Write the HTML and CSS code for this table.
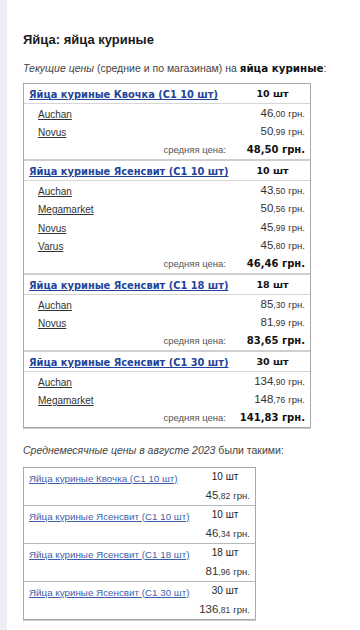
FILE: index.html
```html
<!DOCTYPE html>
<html lang="ru">
<head>
<meta charset="utf-8">
<title>Яйца куриные</title>
<link rel="stylesheet" href="styles.css">
</head>
<body>
<div class="page">
  <h1 class="title">Яйца: яйца куриные</h1>
  <p class="intro"><i>Текущие цены</i> (средние и по магазинам) на <b>яйца куриные</b>:</p>

  <div class="tbl">
    <div class="section">
      <div class="row head"><div class="c1"><a href="#" class="plink">Яйца куриные Квочка (С1 10 шт)</a></div><div class="c2 qty">10 шт</div></div>
      <div class="row"><div class="c1"><a href="#" class="shop">Auchan</a></div><div class="c2 price">46<small>,00</small> <span class="cur">грн.</span></div></div>
      <div class="row"><div class="c1"><a href="#" class="shop">Novus</a></div><div class="c2 price">50<small>,99</small> <span class="cur">грн.</span></div></div>
      <div class="row"><div class="c1 avglabel">средняя цена:</div><div class="c2 avg">48,50 грн.</div></div>
    </div>
    <div class="section">
      <div class="row head"><div class="c1"><a href="#" class="plink">Яйца куриные Ясенсвит (С1 10 шт)</a></div><div class="c2 qty">10 шт</div></div>
      <div class="row"><div class="c1"><a href="#" class="shop">Auchan</a></div><div class="c2 price">43<small>,50</small> <span class="cur">грн.</span></div></div>
      <div class="row"><div class="c1"><a href="#" class="shop">Megamarket</a></div><div class="c2 price">50<small>,56</small> <span class="cur">грн.</span></div></div>
      <div class="row"><div class="c1"><a href="#" class="shop">Novus</a></div><div class="c2 price">45<small>,99</small> <span class="cur">грн.</span></div></div>
      <div class="row"><div class="c1"><a href="#" class="shop">Varus</a></div><div class="c2 price">45<small>,80</small> <span class="cur">грн.</span></div></div>
      <div class="row"><div class="c1 avglabel">средняя цена:</div><div class="c2 avg">46,46 грн.</div></div>
    </div>
    <div class="section">
      <div class="row head"><div class="c1"><a href="#" class="plink">Яйца куриные Ясенсвит (С1 18 шт)</a></div><div class="c2 qty">18 шт</div></div>
      <div class="row"><div class="c1"><a href="#" class="shop">Auchan</a></div><div class="c2 price">85<small>,30</small> <span class="cur">грн.</span></div></div>
      <div class="row"><div class="c1"><a href="#" class="shop">Novus</a></div><div class="c2 price">81<small>,99</small> <span class="cur">грн.</span></div></div>
      <div class="row"><div class="c1 avglabel">средняя цена:</div><div class="c2 avg">83,65 грн.</div></div>
    </div>
    <div class="section">
      <div class="row head"><div class="c1"><a href="#" class="plink">Яйца куриные Ясенсвит (С1 30 шт)</a></div><div class="c2 qty">30 шт</div></div>
      <div class="row"><div class="c1"><a href="#" class="shop">Auchan</a></div><div class="c2 price">134<small>,90</small> <span class="cur">грн.</span></div></div>
      <div class="row"><div class="c1"><a href="#" class="shop">Megamarket</a></div><div class="c2 price">148<small>,76</small> <span class="cur">грн.</span></div></div>
      <div class="row"><div class="c1 avglabel">средняя цена:</div><div class="c2 avg">141,83 грн.</div></div>
    </div>
  </div>

  <p class="intro intro2"><i>Среднемесячные цены в августе 2023</i> были такими:</p>

  <div class="tbl tbl2">
    <div class="group">
      <div class="row"><div class="m1"><a href="#" class="mlink">Яйца куриные Квочка (С1 10 шт)</a></div><div class="m2 mqty">10 шт</div></div>
      <div class="row"><div class="m1"></div><div class="m2 price">45<small>,82</small> <span class="cur">грн.</span></div></div>
    </div>
    <div class="group">
      <div class="row"><div class="m1"><a href="#" class="mlink">Яйца куриные Ясенсвит (С1 10 шт)</a></div><div class="m2 mqty">10 шт</div></div>
      <div class="row"><div class="m1"></div><div class="m2 price">46<small>,34</small> <span class="cur">грн.</span></div></div>
    </div>
    <div class="group">
      <div class="row"><div class="m1"><a href="#" class="mlink">Яйца куриные Ясенсвит (С1 18 шт)</a></div><div class="m2 mqty">18 шт</div></div>
      <div class="row"><div class="m1"></div><div class="m2 price">81<small>,96</small> <span class="cur">грн.</span></div></div>
    </div>
    <div class="group">
      <div class="row"><div class="m1"><a href="#" class="mlink">Яйца куриные Ясенсвит (С1 30 шт)</a></div><div class="m2 mqty">30 шт</div></div>
      <div class="row"><div class="m1"></div><div class="m2 price">136<small>,81</small> <span class="cur">грн.</span></div></div>
    </div>
  </div>
</div>
</body>
</html>
```
FILE: styles.css
```css
html, body {
  margin: 0;
  padding: 0;
  background: #ffffff;
}
body {
  font-family: "Liberation Sans", Arial, sans-serif;
  color: #333333;
}
.page {
  border-left: 7px solid #eceef3;
  min-height: 630px;
  box-sizing: border-box;
  padding: 32px 0 0 16px;
}
.title {
  margin: 0;
  font-family: "Liberation Sans", Arial, sans-serif;
  font-size: 13px;
  line-height: 16px;
  font-weight: bold;
  color: #1a1a1a;
}
.intro {
  margin: 12.5px 0 0 0;
  font-size: 10.5px;
  line-height: 14px;
  color: #444444;
}
.intro b {
  font-family: "DejaVu Sans", Verdana, sans-serif;
  font-size: 10.3px;
  color: #111111;
}
.intro i {
  color: #444444;
}
.tbl {
  margin-top: 8.5px;
  width: 288px;
  box-sizing: border-box;
  border: 1px solid #a9a9a9;
  box-shadow: 0 1px 0 #c8c8c8;
}
.section + .section {
  border-top: 2px solid #cfcfcf;
}
.row {
  display: flex;
  align-items: center;
  height: 18.5px;
}
.row.head {
  border-bottom: 1px solid #d6d6d6;
}
.c1 {
  width: 211px;
  flex: none;
  white-space: nowrap;
}
.c2 {
  flex: 1;
  white-space: nowrap;
}
.plink {
  margin-left: 5px;
  font-family: "DejaVu Sans", Verdana, sans-serif;
  font-size: 9.85px;
  font-weight: bold;
  color: #23449b;
  text-decoration: underline;
}
.qty {
  text-align: center;
  font-family: "DejaVu Sans", Verdana, sans-serif;
  font-size: 9.5px;
  font-weight: bold;
  color: #111111;
}
.shop {
  margin-left: 14px;
  font-size: 10px;
  color: #333333;
  text-decoration: underline;
}
.price {
  text-align: right;
  padding-right: 5px;
  font-size: 11.5px;
  color: #333333;
}
.price small {
  font-size: 8.5px;
}
.price .cur {
  font-size: 9.5px;
}
.avglabel {
  text-align: right;
  box-sizing: border-box;
  padding-right: 9px;
  font-size: 9.5px;
  color: #555555;
}
.avg {
  text-align: right;
  padding-right: 5px;
  font-family: "DejaVu Sans", Verdana, sans-serif;
  font-size: 10px;
  font-weight: bold;
  color: #111111;
}
.intro2 {
  margin-top: 15px;
}
.tbl2 {
  margin-top: 9.5px;
  width: 233px;
}
.group + .group {
  border-top: 1px solid #b8b8b8;
}
.m1 {
  width: 171px;
  flex: none;
  white-space: nowrap;
}
.m2 {
  flex: 1;
  white-space: nowrap;
}
.mlink {
  margin-left: 5px;
  font-size: 9.8px;
  color: #3d5fab;
  text-decoration: underline;
}
.mqty {
  text-align: center;
  font-size: 10px;
  color: #222222;
}
```
